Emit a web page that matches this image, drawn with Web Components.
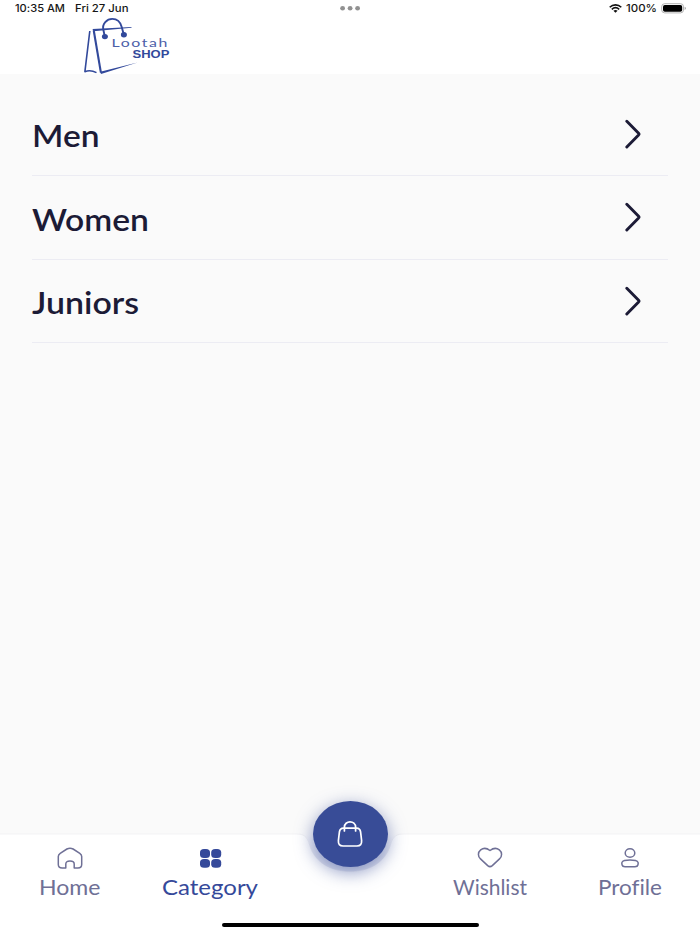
<!DOCTYPE html>
<html lang="en">
<head>
<meta charset="UTF-8">
<meta name="viewport" content="width=device-width, initial-scale=1.0">
<title>Lootah Shop</title>
<style>
    body {
        margin: 0;
        font-family: Lato, "Liberation Sans", sans-serif;
        font-variant-ligatures: none;
        background: #fafafa;
    }
</style>
</head>
<body>
<shop-app>
    <status-bar slot="top"></status-bar>
    <shop-logo slot="top"></shop-logo>
    <category-row label="Men" size="30.5" width="67.5"></category-row>
    <category-row label="Women" size="30.5" width="117"></category-row>
    <category-row label="Juniors" size="30.5" width="107"></category-row>
    <bottom-nav slot="bottom">
        <nav-item icon="home" label="Home" width="61.5"></nav-item>
        <nav-item icon="category" label="Category" width="96" active></nav-item>
        <cart-button></cart-button>
        <nav-item icon="heart" label="Wishlist" width="74"></nav-item>
        <nav-item icon="profile" label="Profile" width="64"></nav-item>
    </bottom-nav>
</shop-app>

<script>
    class BaseElement extends HTMLElement {
        constructor(){
            super()
            this.attachShadow({ mode: 'open' })
        }
        connectedCallback(){
            const template = document.createElement('template')
            template.innerHTML = `<style>${this.getStyles()}</style>${this.getTemplate()}`
            this.shadowRoot.replaceChildren(template.content.cloneNode(true))
        }
        getStyles(){ return '' }
        getTemplate(){ return '<slot></slot>' }
    }

    // one line of text stretched to a given width
    class wideText extends BaseElement {
        getStyles(){
            return `
                :host { display: block; flex: none; }
                svg { display: block; overflow: visible; }
                text { fill: currentColor; }
            `
        }
        getTemplate(){
            const width = this.getAttribute('width')
            const size = Number(this.getAttribute('size'))
            return `
                <svg width="${width}" height="${size}">
                    <text x="0" y="${size * 0.86}" font-size="${size}" textLength="${width}" lengthAdjust="spacingAndGlyphs">${this.getAttribute('text')}</text>
                </svg>
            `
        }
    }

    class shopApp extends BaseElement {
        getStyles(){
            return `
                :host { display: flex; flex-direction: column; height: 100vh; overflow: hidden; }
                header { height: 74px; background: #fff; flex: none; }
                main { flex: 1; padding: 18.5px 32px 0; }
            `
        }
        getTemplate(){
            return `
                <header><slot name="top"></slot></header>
                <main><slot></slot></main>
                <slot name="bottom"></slot>
            `
        }
    }

    class statusBar extends BaseElement {
        getStyles(){
            return `
                :host {
                    display: grid;
                    grid-template-columns: 1fr auto 1fr;
                    align-items: center;
                    height: 16px;
                    padding: 0 14px 0 15px;
                    color: #161616;
                    font-family: Inter, sans-serif;
                    font-weight: 500;
                }
                .left, .right { display: flex; align-items: center; }
                .left { gap: 10px; }
                .right { justify-content: flex-end; gap: 4px; }
                svg { display: block; }
            `
        }
        getTemplate(){
            return `
                <div class="left">
                    <wide-text text="10:35 AM" size="10" width="50"></wide-text>
                    <wide-text text="Fri 27 Jun" size="10" width="53.5"></wide-text>
                </div>
                <svg width="22" height="6" fill="#919191">
                    <ellipse cx="2.6" cy="3.2" rx="2.4" ry="2.2"/>
                    <ellipse cx="10.1" cy="3.2" rx="2.4" ry="2.2"/>
                    <ellipse cx="17.6" cy="3.2" rx="2.4" ry="2.2"/>
                </svg>
                <div class="right">
                    <svg width="13" height="9" viewBox="0 0 13 9" fill="none" stroke="#111" stroke-width="1.6">
                        <path d="M.7 3.3C4 .1 9 .1 12.3 3.3M2.8 5.3C5 3.4 8 3.4 10.2 5.3"/>
                        <path d="M4.4 6.8Q6.5 5.3 8.6 6.8L6.5 8.7Z" fill="#111" stroke="none"/>
                    </svg>
                    <wide-text text="100%" size="10" width="31"></wide-text>
                    <svg width="25" height="11" viewBox="0 0 25 11">
                        <rect x=".7" y=".7" width="21.8" height="9.2" rx="3" fill="#fff" stroke="#aaa" stroke-width=".9"/>
                        <rect x="2" y="1.9" width="19.2" height="6.8" rx="1.8" fill="#000"/>
                        <path d="M23.6 3.7q1.3.3 1.3 1.6t-1.3 1.6z" fill="#aaa"/>
                    </svg>
                </div>
            `
        }
    }

    class shopLogo extends BaseElement {
        getStyles(){
            return `
                :host { display: block; height: 58px; margin-left: 83px; color: #32499b; }
                svg { display: block; overflow: visible; }
                text { fill: currentColor; }
                .light { font-family: Lato, sans-serif; font-weight: 400; fill: #4c60a8; }
                .bold { font-family: "Liberation Sans", sans-serif; font-weight: 700; }
            `
        }
        getTemplate(){
            return `
                <svg width="90" height="58" viewBox="83 16 90 58">
                    <g fill="none" stroke="currentColor" stroke-linejoin="round">
                        <path d="M100.9 72.6 93.7 30.3" stroke-width="2.1"/>
                        <path d="M89.8 31 84.9 71.7q5.4-2.2 11.6.9" stroke-width="1.6"/>
                        <path d="M104.8 36.5 103.4 30C101.8 23.5 107 18.9 112.3 18.9C118.5 18.9 120.5 22.5 121.7 27L123.8 34.5" stroke-width="1.9"/>
                    </g>
                    <g fill="currentColor">
                        <path d="M92.5 28.9 131.5 27 131.5 27.8 93.5 31.2z"/>
                        <path d="M100.2 71.8 137.5 62.4 101 74z"/>
                        <ellipse cx="104.9" cy="36.6" rx="3" ry="2.7"/>
                        <ellipse cx="123.9" cy="34.8" rx="3" ry="2.7"/>
                    </g>
                    <text class="light" x="111.6" y="46.6" font-size="12" letter-spacing="1.2" textLength="57.4" lengthAdjust="spacingAndGlyphs">Lootah</text>
                    <text class="bold" x="132.5" y="57.6" font-size="10" textLength="36.8" lengthAdjust="spacingAndGlyphs">SHOP</text>
                </svg>
            `
        }
    }

    class categoryRow extends BaseElement {
        getStyles(){
            return `
                :host {
                    display: flex;
                    align-items: center;
                    justify-content: space-between;
                    box-sizing: border-box;
                    height: 83.6px;
                    padding: 0 26px 0 0;
                    border-bottom: 1.5px solid #ececf3;
                    color: #1c1b36;
                    font-weight: 600;
                }
                wide-text { padding-top: 5px; }
            `
        }
        getTemplate(){
            return `
                <wide-text text="${this.getAttribute('label')}" size="${this.getAttribute('size')}" width="${this.getAttribute('width')}"></wide-text>
                <svg width="18" height="30" fill="none" stroke="currentColor" stroke-width="2.9" stroke-linecap="round" stroke-linejoin="round">
                    <path d="M2.8 2.2 14.6 14.2Q15.4 15 14.6 15.9L2.8 28"/>
                </svg>
            `
        }
    }

    class bottomNav extends BaseElement {
        getStyles(){
            return `
                :host { display: grid; flex: none; height: 99px; }
                .shape, .items { grid-area: 1 / 1; }
                .shape { display: block; overflow: visible; }
                .items {
                    display: grid;
                    grid-template-columns: repeat(5, 1fr);
                    grid-template-rows: 87px 1fr;
                    z-index: 1;
                }
                .indicator {
                    grid-column: 1 / -1;
                    justify-self: center;
                    margin-top: 1.5px;
                    width: 257px;
                    height: 4.5px;
                    border-radius: 3px;
                    background: #000;
                }
            `
        }
        getTemplate(){
            return `
                <svg class="shape" width="700" height="99" viewBox="0 0 700 99">
                    <defs>
                        <linearGradient id="notch" x1="0" y1="0" x2="0" y2="1">
                            <stop offset="0" stop-color="#fafafa"/>
                            <stop offset=".6" stop-color="#e4e6f0"/>
                        </linearGradient>
                    </defs>
                    <path d="M-2 0H297C306 0 308 5 310 12C315 28 330 37.3 350 37.3S385 28 390 12C392 5 394 0 403 0H702V100H-2Z" fill="#fff" stroke="#f3f3f5"/>
                    <path d="M303 .5C307 2 308 5 310 12C315 28 330 37.3 350 37.3S385 28 390 12C392 5 393 2 397 .5Z" fill="url(#notch)"/>
                </svg>
                <div class="items">
                    <slot></slot>
                    <div class="indicator"></div>
                </div>
            `
        }
    }

    const icons = {
        home: '<path d="M9.8 22H6.1Q2.3 22 2.3 18.5V10.6Q2.3 8.6 4.2 7.3L10.9 3Q14 1.3 17.1 3L23.8 7.3Q25.7 8.6 25.7 10.6V18.5Q25.7 22 21.9 22H18.2V18Q18.2 15 14 15T9.8 18Z"/>',
        category: '<g fill="currentColor" stroke="none"><rect x="4" y="3" width="10" height="8.9" rx="4" ry="3.5"/><rect x="15.2" y="3" width="10" height="8.9" rx="4" ry="3.5"/><rect x="4" y="12.9" width="10" height="8.9" rx="4" ry="3.5"/><rect x="15.2" y="12.9" width="10" height="8.9" rx="4" ry="3.5"/></g>',
        heart: '<path d="M14 4.5C17 2.2 20.5 1.7 23.3 3.9C26.4 6.4 26.2 10.4 23.5 12.9L16.3 19.6Q14 21.6 11.7 19.6L4.5 12.9C1.8 10.4 1.6 6.4 4.7 3.9C7.5 1.7 11 2.2 14 4.5Z"/>',
        profile: '<ellipse cx="14" cy="7" rx="4.8" ry="4.3"/><path d="M8.5 14.5Q14 13.3 19.5 14.5C22.6 15.3 22.4 17.2 21.9 19Q21.5 20.7 19 20.7H9Q6.5 20.7 6.1 19C5.6 17.2 5.4 15.3 8.5 14.5Z"/>'
    }

    class navItem extends BaseElement {
        getStyles(){
            return `
                :host {
                    display: flex;
                    flex-direction: column;
                    align-items: center;
                    gap: 6.5px;
                    padding-top: 12px;
                    color: #6f7096;
                }
                :host([active]) { color: #35499a; }
                svg { display: block; }
            `
        }
        getTemplate(){
            return `
                <svg width="28" height="24" viewBox="0 0 28 24" fill="none" stroke="currentColor" stroke-width="1.5" stroke-linejoin="round">${icons[this.getAttribute('icon')]}</svg>
                <wide-text text="${this.getAttribute('label')}" size="20.5" width="${this.getAttribute('width')}"></wide-text>
            `
        }
    }

    class cartButton extends BaseElement {
        getStyles(){
            return `
                :host { display: flex; justify-content: center; }
                button {
                    display: flex;
                    align-items: center;
                    justify-content: center;
                    width: 75px;
                    height: 66px;
                    margin-top: -33px;
                    padding: 0;
                    border: none;
                    border-radius: 50%;
                    background: #384c97;
                    box-shadow: 0 5px 18px rgba(56, 76, 151, .6);
                }
            `
        }
        getTemplate(){
            return `
                <button aria-label="Cart">
                    <svg width="26" height="26" fill="none" stroke="#fff" stroke-width="1.7" stroke-linecap="round">
                        <path d="M6.4 7.2H19.6Q23 7.2 23.6 11L24.6 19.5Q25 25 20 25H6Q1 25 1.4 19.5L2.4 11Q3 7.2 6.4 7.2Z"/>
                        <path d="M7.4 10V6.3C7.4-.9 18.6-.9 18.6 6.3V10"/>
                    </svg>
                </button>
            `
        }
    }

    customElements.define('wide-text', wideText)
    customElements.define('shop-app', shopApp)
    customElements.define('status-bar', statusBar)
    customElements.define('shop-logo', shopLogo)
    customElements.define('category-row', categoryRow)
    customElements.define('bottom-nav', bottomNav)
    customElements.define('nav-item', navItem)
    customElements.define('cart-button', cartButton)
</script>
</body>
</html>
